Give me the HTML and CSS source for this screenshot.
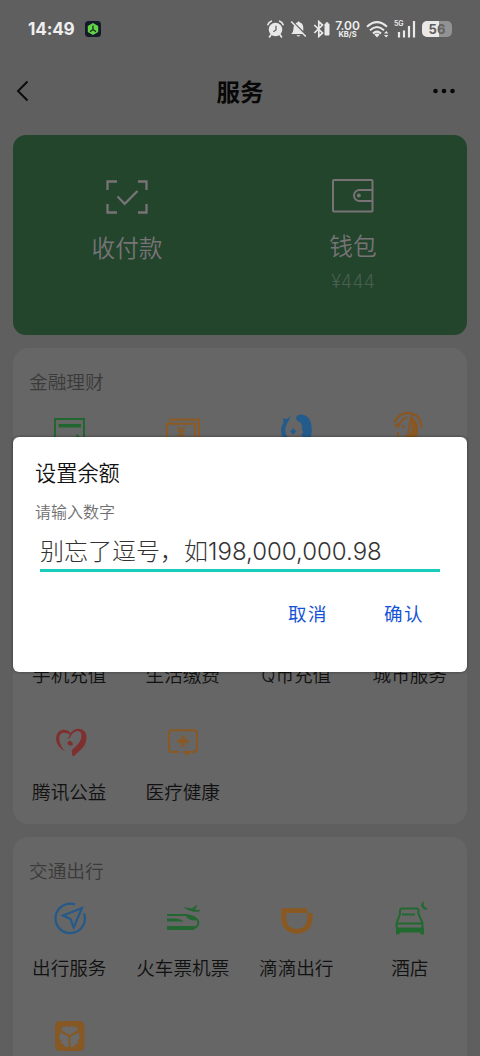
FILE: index.html
```html
<!DOCTYPE html>
<html lang="zh-CN">
<head>
<meta charset="utf-8">
<title>服务</title>
<link rel="stylesheet" href="styles.css">
</head>
<body>
<div class="screen">
  <div class="status">
    <span class="clock">14:49</span>
    <svg class="app-badge" width="16" height="16" viewBox="0 0 16 16"><rect width="16" height="16" rx="3.5" fill="#151a2b"/><path d="M8 2l5.2 3v6L8 14l-5.2-3V5z" fill="#62d448"/><path d="M8 4.5v4M8 8.500l-3 2.200M8 8.500l3 2.200" stroke="#17301d" stroke-width="1.300" fill="none"/></svg>
    <div class="status-icons">
      <svg width="17" height="18" viewBox="0 0 17 18"><circle cx="8.500" cy="9.500" r="6.800" fill="#e9e9e9"/><path d="M1 4.600Q1.800 2 4.300 1.200M16 4.600Q15.200 2 12.700 1.200M3.800 15l-1.300 1.900M13.200 15l1.300 1.900" stroke="#e9e9e9" stroke-width="1.700" fill="none" stroke-linecap="round"/><path d="M9 5.800v4.200l-2.700 1.700" stroke="#666" stroke-width="1.300" fill="none"/></svg>
      <svg width="17" height="18" viewBox="0 0 17 18"><path d="M4.300 5L13 14H1.200q2.200-2 2.200-4.500Q3.300 6.500 4.300 5zM5.600 3.600Q6.500 2.500 7.600 2.200 8.500.5 9.500 2.200 13.300 3.200 13.300 8v3z" fill="#e9e9e9"/><path d="M6.300 15.200h4.200Q8.400 17.800 6.300 15.200z" fill="#e9e9e9"/><path d="M1.200 1.500L15.800 16.500" stroke="#e9e9e9" stroke-width="1.500"/></svg>
      <svg width="18" height="18" viewBox="0 0 18 18"><path d="M1.300 5l8.200 8-3.700 3.400V1.600L9.500 5l-8.200 8" stroke="#e9e9e9" stroke-width="1.700" fill="none"/><rect x="11.500" y="3.500" width="5" height="12" rx="1" fill="#e9e9e9"/><rect x="12.800" y="2.300" width="2.400" height="2" fill="#e9e9e9"/></svg>
      <div class="speed"><b>7.00</b><small>KB/S</small></div>
      <svg width="23" height="18" viewBox="0 0 23 18"><path d="M1 6.700Q11 -2.400 21 6.700M4 10.300Q11 3.700 18 10.300M7 13.500Q11 9.700 15 13.500" stroke="#e9e9e9" stroke-width="2" fill="none"/><path d="M8.300 14.600Q11 12.300 13.700 14.600L11 17.400z" fill="#e9e9e9"/><path d="M18 13.500l2.200-2.500 2.200 2.500zM18 15l2.200 2.500 2.200-2.500z" fill="#e9e9e9"/></svg>
      <div class="signal"><small>5G</small><svg width="22" height="18" viewBox="0 0 22 18"><path d="M5 12v5.500M10 10.500v7M15 6v11.500M20 1v16.500" stroke="#e9e9e9" stroke-width="2.200"/></svg></div>
      <div class="battery"><span>5</span><span class="used">6</span></div>
    </div>
  </div>

  <header class="nav">
    <svg width="14" height="22" viewBox="0 0 14 22"><path d="M11.500 1.500L2 11l9.500 9.500" stroke="#0a0a0a" stroke-width="1.900" fill="none"/></svg>
    <h1>服务</h1>
    <svg width="24" height="6" viewBox="0 0 24 6"><g fill="#070707"><circle cx="3.500" cy="3" r="2.300"/><circle cx="12" cy="3" r="2.300"/><circle cx="20.500" cy="3" r="2.300"/></g></svg>
  </header>

  <main>
    <section class="hero">
      <div class="hero-item">
        <svg width="44" height="36" viewBox="0 0 44 36"><path d="M2.500 11V2.500H12M33 2.500h8.500V11M41.500 25v8.500H33M12 33.500H2.500V25" stroke="#787377" stroke-width="2.300" fill="none"/><path d="M12.500 17.500l7.200 7.300L32.500 12" stroke="#787377" stroke-width="2.300" fill="none"/></svg>
        <span>收付款</span>
      </div>
      <div class="hero-item wallet">
        <svg width="44" height="36" viewBox="0 0 44 36"><rect x="2" y="2" width="39.500" height="31.500" rx="1" stroke="#787377" stroke-width="2" fill="none"/><path d="M41 12H28.500a5.500 5.500 0 0 0 0 11H41" stroke="#787377" stroke-width="2" fill="none"/><circle cx="27.800" cy="17.500" r="2" fill="#787377"/></svg>
        <span>钱包</span>
        <em>¥444</em>
      </div>
    </section>

    <section class="card finance">
      <h2>金融理财</h2>
      <div class="grid">
        <div class="cell"><svg width="44" height="44" viewBox="0 0 44 44"><path d="M7 12h29v28H7z" stroke="#20662f" stroke-width="2" fill="none"/><path d="M10.500 18.700H33" stroke="#20662f" stroke-width="3.500"/><path d="M28.500 28l5 5" stroke="#20662f" stroke-width="2"/></svg></div>
        <div class="cell"><svg width="44" height="44" viewBox="0 0 44 44"><path d="M9.500 15.500V12.500H38V36M6 16.800H34v20H6z" stroke="#8c5a22" stroke-width="2" fill="none"/><path d="M16.500 19.500l3.500 4.500 3.500-4.500M20 24v8M16 24.500h8M16 28h8" stroke="#8c5a22" stroke-width="1.700" fill="none"/></svg></div>
        <div class="cell"><svg width="44" height="44" viewBox="0 0 44 44"><path d="M16 8.500L13.500 14Q9.500 20 10.500 25q1 6 6 10Q6 34 6 23.500q0-4.500 2.500-8L8 11.500l4 .5zM21 11q1-4 6.500-3.300 9.500 1.300 9.200 16.300 0 9-5 12l-5.500-8.500 2-2-1.300-4q1-5-3.200-7-2.800-1-2.700-3.500z" fill="#235c8c"/><path d="M18.200 21.200l3.100 3.300-3.100 3.300-3.100-3.300z" fill="#235c8c"/></svg></div>
        <div class="cell"><svg width="44" height="44" viewBox="0 0 44 44"><path d="M6.500 15.500Q10.500 6 20 5.800q13 1 13.500 14.500" stroke="#8a5722" stroke-width="2.200" fill="none"/><path d="M7 18.500l5-2q3-5.500 7.500-6M23.500 8L20 28q-4 3-4.500 6" stroke="#8a5722" stroke-width="2" fill="none"/><path d="M22.500 10q7.500 3 7.500 11-1 7 0 14H15l5-7q3-1 4-7zM7 19.500l5-2.500-1 4z" fill="#8a5722"/><path d="M10 25v9" stroke="#8a5722" stroke-width="2"/><circle cx="15.500" cy="19.500" r="1.500" fill="#8a5722"/></svg></div>
      </div>
    </section>

    <section class="card life">
      <div class="grid">
        <div class="cell"><span>手机充值</span></div>
        <div class="cell"><span>生活缴费</span></div>
        <div class="cell"><span>Q币充值</span></div>
        <div class="cell"><span>城市服务</span></div>
        <div class="cell"><svg width="44" height="44" viewBox="0 0 44 44"><path d="M17.500 31.500Q8.500 27 8 19q0-8 7-9.200 4.500-.5 7.500 3.200Q26 8.500 31 8.700q7 .8 7.500 8.300.2 7-5 12l-7.500 7-1.500.3-.5-3.300Q23 30 26 28q7.500-6 7.500-12.500 0-4-3.500-4.500-4.500-.3-8.500 7l-2 1L22 14.500Q18 12 14.500 13q-3.500 1-3.300 5.800.5 7 6.300 13z" fill="#802f2f"/><path d="M19.500 22.500l2-1.800 3 1.500.3 3-2.300.5-3-1.500z" fill="#802f2f"/></svg><span>腾讯公益</span></div>
        <div class="cell"><svg width="44" height="44" viewBox="0 0 44 44"><path d="M18 32h-6.500q-3.700 0-3.700-3.700V14q0-3.700 3.700-3.700h20.800Q36 10.300 36 14v14.300q0 3.700-3.700 3.700H28" stroke="#8a5922" stroke-width="2" fill="none"/><path d="M22 15.500v11.500M16.200 21.200h11.600" stroke="#8a5922" stroke-width="3.300"/><path d="M21.500 31h7l-1.700 5.500z" fill="#8a5922"/></svg><span>医疗健康</span></div>
      </div>
    </section>

    <section class="card travel">
      <h2>交通出行</h2>
      <div class="grid">
        <div class="cell"><svg width="44" height="44" viewBox="0 0 44 44"><path d="M27 8.500A14.700 14.700 0 1 0 36 17.300" stroke="#245a8a" stroke-width="2.300" fill="none"/><path d="M34 12L15 19.500l7.500 3.500 3.200 8.500z" stroke="#245a8a" stroke-width="2.200" fill="none"/></svg><span>出行服务</span></div>
        <div class="cell"><svg width="44" height="44" viewBox="0 0 44 44"><path d="M6 19h19q13 2 12.300 8.500Q36.500 32 31 32.300" stroke="#236632" stroke-width="1.900" fill="none"/><path d="M6 22.500h9q5 .5 8 3H6zM25 19.500q7 0 10.500 4.500-5 1.500-9.500-2zM6 30h28l-1 4H6zM22 11l9 1.500 4.500-3.500 1 .5-3 4 5.500.5q.5 1-1 1.500-8 1.500-16-4.500z" fill="#236632"/></svg><span>火车票机票</span></div>
        <div class="cell"><svg width="44" height="44" viewBox="0 0 44 44"><path fill-rule="evenodd" d="M6.300 12.300h26V17h5.300v5.500c0 20.300-31.300 20.300-31.300 0zM11.300 17v5.500c0 14 21 14 21 0V17z" fill="#8a5922"/></svg><span>滴滴出行</span></div>
        <div class="cell"><svg width="44" height="44" viewBox="0 0 44 44"><path d="M12 19v-4.500q0-2 2-2h14.500q2 0 2 2V19M14 18.500h13M12 18L8.700 27v5M30.500 18L34.500 27v5M9 27.500h25" stroke="#206a30" stroke-width="2" fill="none"/><path d="M8 31.500h28v7h-3l-1-2H12l-1 2H8zM36 5q-2 6 4 7.500-2 2-4.500.5-5-4.500.5-8z" fill="#206a30"/></svg><span>酒店</span></div>
        <div class="cell"><svg width="44" height="44" viewBox="0 0 44 44"><rect x="7" y="7" width="29.500" height="30" rx="5" fill="#855824"/><path d="M21.500 21L13 16l2-3.500 3 .8 1-2 2.500 2.500 2.500-2.500 1 2 3-.8 2 3.500zM20.500 22.800V33l-4-.5-.5-2.500-3.500-.5 1-3-2.500-2.500 1.500-5.500zM22.500 22.800V33l4-.5.5-2.500 3.500-.5-1-3 2.500-2.500-1.500-5.500z" fill="#6a6a6a"/></svg></div>
      </div>
    </section>
  </main>

  <div class="dialog">
    <h3>设置余额</h3>
    <p>请输入数字</p>
    <div class="field">别忘了逗号，如198,000,000.98</div>
    <div class="actions"><span>取消</span><span>确认</span></div>
  </div>
</div>
</body>
</html>
```
FILE: styles.css
```css
* { box-sizing: border-box; margin: 0; padding: 0; }
body { background: #5f5f5f; font-family: Inter, "Noto Sans CJK SC", sans-serif; }
svg { display: block; flex: none; }
.screen { position: relative; width: 480px; height: 1056px; overflow: hidden; background: #5f5f5f; }

.status { display: flex; align-items: center; height: 57px; padding: 0 28px; color: #efefef; }
.clock { width: 47px; font-size: 17.200px; font-weight: 700; letter-spacing: -.2px; line-height: 20px; white-space: nowrap; }
.app-badge { margin: 1px 0 0 10px; }
.status-icons { display: flex; align-items: center; margin-left: auto; gap: 6px; }
.speed { display: flex; flex-direction: column; align-items: center; width: 25px; margin: 0 0 0 -2px; }
.speed b { font-size: 12px; line-height: 11px; font-weight: 600; }
.speed small { font-size: 7.5px; line-height: 7px; font-weight: 700; }
.signal { position: relative; width: 22px; margin-left: -1px; }
.signal small { position: absolute; left: 0; top: 0; font-size: 7px; line-height: 8px; font-weight: 600; letter-spacing: -.2px; }
.battery { display: flex; justify-content: center; width: 30px; height: 16px; border-radius: 5px; background: linear-gradient(90deg, #e9e9e9 0 57%, #929292 57%); color: #5d5d5d; font-size: 13px; line-height: 16px; font-weight: 700; }
.battery .used { color: #636363; }

.nav { display: flex; align-items: center; justify-content: space-between; height: 78px; padding: 0 24px 11px 16px; }
.nav h1 { font-size: 23.500px; line-height: 30px; font-weight: 700; color: #080808; padding: 4px 0 0 18px; }

main { display: flex; flex-direction: column; gap: 13px; padding: 0 13px; }
.hero { display: grid; grid-template-columns: 1fr 1fr; height: 200px; border-radius: 13px; background: #22452c; }
.hero-item { display: flex; flex-direction: column; align-items: center; padding: 44px 0 0 1px; color: #787377; font-size: 23.700px; line-height: 32px; font-weight: 350; }
.hero-item span { margin-top: 18px; }
.wallet { padding: 43px 1px 0 0; }
.wallet span { margin-top: 17px; }
.hero-item em { font-style: normal; font-size: 18px; line-height: 24px; margin-top: 7px; color: #4a5e51; }

.card { flex: none; padding-top: 21px; border-radius: 15px; background: #666; }
.card h2 { padding-left: 16px; font-size: 18.700px; line-height: 28px; font-weight: 350; color: #3a3a3a; }
.grid { display: grid; grid-template-columns: repeat(4, 1fr); row-gap: 32px; margin-top: 10px; }
.cell { display: flex; flex-direction: column; align-items: center; justify-content: space-between; height: 85px; font-size: 18.600px; line-height: 26px; font-weight: 350; color: #111; white-space: nowrap; }
.cell span { margin: auto 1px 0 0; }
.finance { height: 183px; }
.life { height: 276px; padding-top: 59px; height: 280px; }
.life .grid { margin-top: 0; }
.travel { height: 300px; }
.travel .grid { row-gap: 33px; }

.dialog { position: absolute; left: 13px; top: 436.500px; width: 454px; height: 235.500px; padding: 21px 27px 0 22px; border-radius: 6px; background: #fff; box-shadow: 0 0 3px rgba(0,0,0,.5); }
.dialog h3 { font-size: 21.200px; line-height: 30px; font-weight: 350; color: #111; }
.dialog p { margin-top: 12px; font-size: 16px; line-height: 24px; font-weight: 350; color: #707070; }
.field { margin: 11.500px 0 0 5px; height: 37px; border-bottom: 3px solid #16cdbb; font-size: 24px; line-height: 34px; font-weight: 300; color: #333; white-space: nowrap; }
.actions { display: flex; justify-content: flex-end; gap: 56px; padding-right: 16px; margin-top: 28px; font-size: 18.500px; line-height: 28px; letter-spacing: 1.500px; font-weight: 400; color: #1553d6; }
```
